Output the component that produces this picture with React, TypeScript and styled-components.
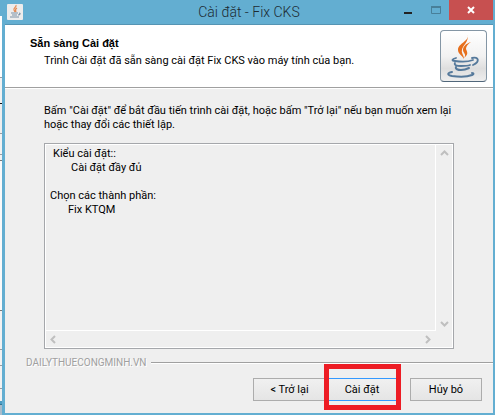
import React from "react";
import styled, { createGlobalStyle } from "styled-components";

const GlobalStyle = createGlobalStyle`
  *, *::before, *::after { box-sizing: border-box; }
  html, body, #root { height: 100%; }
  body {
    margin: 0;
    overflow: hidden;
    background: #efefef;
    color: #000;
    font: 11px/14px Roboto, "Liberation Sans", Arial, sans-serif;
  }
`;

const Desktop = styled.div`
  display: flex;
  min-height: 100vh;
`;

const Backdrop = styled.div`
  display: flex;
  flex-direction: column;
  flex: 0 0 2px;
  background: #63aed1;
`;

const Strip = styled.div<{ $size: number; $color: string; $line: string }>`
  flex: ${(p) => p.$size} 0 0;
  background: ${(p) => p.$color};
  border-bottom: 1px solid ${(p) => p.$line};
`;

const Window = styled.main`
  flex: 1;
  min-width: 0;
  display: flex;
  flex-direction: column;
  border: solid #63aed1;
  border-width: 0 2px 2px 3px;
  background: #efefef;
`;

const TitleBar = styled.header`
  display: grid;
  grid-template-columns: 1fr auto 1fr;
  height: 25px;
  background: #63aed1;
  border-bottom: 1px solid #5594b3;
`;

const AppIcon = styled.span`
  display: flex;
  width: 16px;
  height: 16px;
  margin: 4px 0 0 2px;
  border-radius: 1px;
  background: #ececec;
`;

const WindowTitle = styled.h1`
  margin: 0;
  font: 300 14px/24px Roboto, sans-serif;
  color: #1c2b33;
  white-space: nowrap;
`;

const WindowControls = styled.div`
  display: flex;
  justify-content: flex-end;
  align-items: flex-start;
`;

const ControlButton = styled.button<{ $close?: boolean }>`
  display: flex;
  width: ${(p) => (p.$close ? 44 : 27)}px;
  height: 20px;
  padding: 0;
  border: 0;
  align-items: center;
  justify-content: center;
  background: ${(p) => (p.$close ? "#c75050" : "transparent")};
`;

const Intro = styled.section`
  display: flex;
  justify-content: space-between;
  height: 63px;
  padding: 5px 6px 0 25px;
  background: #fff;
  border-bottom: 1px solid #a0a0a0;
  box-shadow: 0 1px #fff;
`;

const IntroText = styled.div`
  padding-top: 6px;
`;

const Heading = styled.h2`
  margin: 0;
  font: 700 11px/14px "Liberation Sans", Arial, sans-serif;
`;

const Paragraph = styled.p<{ $indent?: boolean }>`
  margin: 0;
  padding: ${(p) => (p.$indent ? "4px 0 0 14px" : "0")};
`;

const JavaTile = styled.div`
  display: flex;
  width: 47px;
  height: 52px;
  border: 1px solid #8496a5;
  border-bottom-color: #50667a;
  border-radius: 4px;
  background: linear-gradient(#fff, #f2f2f2 50%, #dedede 75%, #eee);
`;

const Body = styled.section`
  flex: 1;
  display: flex;
  flex-direction: column;
  padding: 16px 39px 4px;
`;

const Memo = styled.div`
  flex: 1;
  display: grid;
  grid-template-columns: 1fr 17px;
  grid-template-rows: 1fr 17px;
  margin-top: 11px;
  border: 1px solid #a5a7ab;
  outline: 1px solid #fff;
  outline-offset: -2px;
`;

const MemoText = styled.div`
  padding: 3px 5px;
  border: solid #fff;
  border-width: 0 1px 1px 0;
`;

const MemoLine = styled.div<{ $indent: number }>`
  height: 14px;
  padding-left: ${(p) => p.$indent}px;
`;

const ScrollBar = styled.div<{ $vertical?: boolean }>`
  display: flex;
  flex-direction: ${(p) => (p.$vertical ? "column" : "row")};
  justify-content: space-between;
  align-items: center;
  padding: ${(p) => (p.$vertical ? "5px 0 3px" : "0 4px")};
`;

const ScrollArrow = styled.button`
  display: flex;
  padding: 0;
  border: 0;
  background: none;
`;

const Brand = styled.div`
  display: flex;
  align-items: center;
  gap: 5px;
  padding-left: 21px;
  height: 20px;
  margin-bottom: 5px;
  color: #a0a0a0;
  font-size: 10px;
  text-shadow: 1px 1px #fff;

  &::after {
    content: "";
    flex: 1;
    height: 2px;
    background: #a0a0a0;
    border-bottom: 1px solid #fff;
  }
`;

const Actions = styled.footer`
  display: flex;
  justify-content: flex-end;
  padding: 0 11px 12px;
`;

const ActionButton = styled.button<{ $primary?: boolean; $separate?: boolean }>`
  width: ${(p) => (p.$separate || p.$primary ? 72 : 73)}px;
  height: 23px;
  margin-left: ${(p) => (p.$separate ? 12 : 0)}px;
  padding: 0;
  border: 1px solid ${(p) => (p.$primary ? "#3399ff" : "#acacac")};
  background: linear-gradient(#f0f0f0, #e5e5e5);
  color: #000;
  font: inherit;
`;

const Highlight = styled.div`
  position: relative;

  &::after {
    content: "";
    position: absolute;
    inset: -14px -3px -9px -2px;
    border: 5px solid #ed1c24;
    pointer-events: none;
  }
`;

function JavaLogo({ size, height }: { size: number; height: number }) {
  return (
    <svg width={size} height={height} viewBox="0 0 45 50" fill="none" aria-hidden="true">
      <path d="M26 4C29 10 17 12 17 19c0 4 4 5 6 9 0-4-3-6-2-9 0-4 8-9 5-15Z" fill="#e76f1c" />
      <path d="M30 11c-6 2-8 5-8 8 0 3 4 4 1 8 5-4 3-6 2-9 0-3 2-5 5-7Z" fill="#e76f1c" />
      <g stroke="#55799b" strokeLinecap="round">
        <path d="M15 27c-4 1-5 3-1 3 6 1 13 1 18-1" strokeWidth="1.8" />
        <path d="M31 27c7-2 8 4 1 7" strokeWidth="1.9" />
        <path d="M14 32c-1 2 1 3 6 3 4 0 7 0 9-1" strokeWidth="1.8" />
        <path d="M15 36c-1 2 2 3 5 3 4 0 6-1 8-2" strokeWidth="2" />
        <path d="M11 41c-5 1-5 3 0 4 8 1 15 1 20-1 2-1 2-2 0-2" strokeWidth="2" />
      </g>
    </svg>
  );
}

function SmallJavaLogo() {
  return (
    <svg width="16" height="16" viewBox="0 0 16 16" fill="none" aria-hidden="true">
      <path d="M9 1c1 2-3 3-2 5l1 2M10 4C8 5 8 6 9 8" stroke="#e58b54" strokeWidth="1.2" />
      <path d="M4 9h7M5 11h5M12 9c2 0 1 2-1 2M3 13h9" stroke="#7c91a6" strokeWidth="1.2" />
    </svg>
  );
}

const arrows = {
  up: "M1 6 4.500 2.500 8 6",
  down: "M1 3 4.500 6.500 8 3",
  left: "M6 1 2.500 4.500 6 8",
  right: "M3 1 6.500 4.500 3 8",
};

function Arrow({ direction }: { direction: keyof typeof arrows }) {
  return (
    <ScrollArrow aria-label={`Scroll ${direction}`}>
      <svg width="9" height="9" viewBox="0 0 9 9" fill="none">
        <path d={arrows[direction]} stroke="#bfbfbf" strokeWidth="2" />
      </svg>
    </ScrollArrow>
  );
}

const strips = [
  { size: 15, color: "#63aed1", line: "#63aed1" },
  { size: 63, color: "#fff", line: "#9a9ca0" },
  { size: 26, color: "#f2f2f2", line: "#111" },
  { size: 30, color: "#eeeeee", line: "#9a9ca0" },
  { size: 21, color: "#f2f2f2", line: "#9a9ca0" },
  { size: 5, color: "#f2f2f2", line: "#777" },
  { size: 154, color: "#fafafa", line: "#777" },
  { size: 39, color: "#f2f2f2", line: "#9a9ca0" },
  { size: 16, color: "#f2f2f2", line: "#9a9ca0" },
  { size: 22, color: "#f2f2f2", line: "#9a9ca0" },
  { size: 12, color: "#f2f2f2", line: "#f2f2f2" },
  { size: 3, color: "#4d9cc2", line: "#347795" },
  { size: 9, color: "#a9bccb", line: "#a9bccb" },
];

const summary = [
  { indent: 3, text: "Kiểu cài đặt::" },
  { indent: 21, text: "Cài đặt đầy đủ" },
  { indent: 0, text: "" },
  { indent: 0, text: "Chọn các thành phần:" },
  { indent: 18, text: "Fix KTQM" },
];

export default function App() {
  return (
    <>
      <GlobalStyle />
      <Desktop>
        <Backdrop>
          {strips.map((s, i) => (
            <Strip key={i} $size={s.size} $color={s.color} $line={s.line} />
          ))}
        </Backdrop>
        <Window>
          <TitleBar>
            <AppIcon>
              <SmallJavaLogo />
            </AppIcon>
            <WindowTitle>Cài đặt - Fix CKS</WindowTitle>
            <WindowControls>
              <ControlButton aria-label="Minimize">
                <svg width="9" height="9" viewBox="0 0 9 9">
                  <path d="M0 6h8v2H0z" fill="#222" />
                </svg>
              </ControlButton>
              <ControlButton aria-label="Maximize">
                <svg width="10" height="8" viewBox="0 0 10 8" fill="none">
                  <path d="M.5 1h9v6.500h-9z" stroke="#487f99" />
                  <path d="M0 1h10" stroke="#487f99" strokeWidth="2" />
                </svg>
              </ControlButton>
              <ControlButton $close aria-label="Close">
                <svg width="8" height="8" viewBox="0 0 8 8">
                  <path d="m1 1 6 6m0-6L1 7" stroke="#fff" strokeWidth="2" />
                </svg>
              </ControlButton>
            </WindowControls>
          </TitleBar>
          <Intro>
            <IntroText>
              <Heading>Sẵn sàng Cài đặt</Heading>
              <Paragraph $indent>Trình Cài đặt đã sẵn sàng cài đặt Fix CKS vào máy tính của bạn.</Paragraph>
            </IntroText>
            <JavaTile>
              <JavaLogo size={45} height={50} />
            </JavaTile>
          </Intro>
          <Body>
            <Paragraph>
              Bấm "Cài đặt" để bắt đầu tiến trình cài đặt, hoặc bấm "Trở lại" nếu bạn muốn xem lại
              hoặc thay đổi các thiết lập.
            </Paragraph>
            <Memo>
              <MemoText>
                {summary.map((line, i) => (
                  <MemoLine key={i} $indent={line.indent}>
                    {line.text}
                  </MemoLine>
                ))}
              </MemoText>
              <ScrollBar $vertical>
                <Arrow direction="up" />
                <Arrow direction="down" />
              </ScrollBar>
              <ScrollBar>
                <Arrow direction="left" />
                <Arrow direction="right" />
              </ScrollBar>
            </Memo>
          </Body>
          <Brand>DAILYTHUECONGMINH.VN</Brand>
          <Actions>
            <ActionButton>&lt; Trở lại</ActionButton>
            <Highlight>
              <ActionButton $primary>Cài đặt</ActionButton>
            </Highlight>
            <ActionButton $separate>Hủy bỏ</ActionButton>
          </Actions>
        </Window>
      </Desktop>
    </>
  );
}
